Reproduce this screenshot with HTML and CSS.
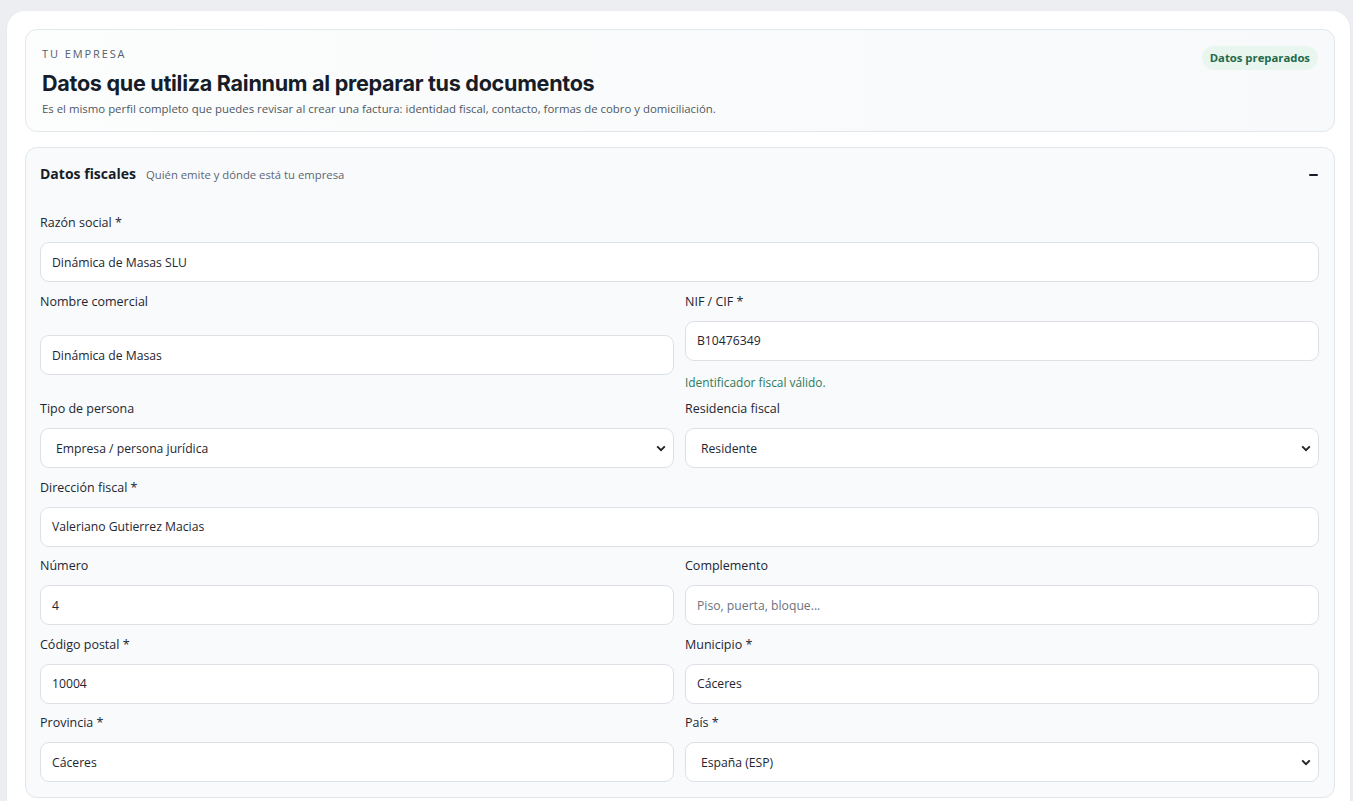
FILE: index.html
```html
<!DOCTYPE html>
<html lang="es">
  <head>
    <meta charset="UTF-8" />
    <title>Tu empresa</title>
    <link rel="stylesheet" href="styles.css">
  </head>
  <body>
    <main class="panel">
      <header class="intro">
        <div class="intro-text">
          <p class="eyebrow">TU EMPRESA</p>
          <h1>Datos que utiliza Rainnum al preparar tus documentos</h1>
          <p class="intro-sub">
            Es el mismo perfil completo que puedes revisar al crear una factura: identidad fiscal, contacto, formas de cobro y domiciliación.
          </p>
        </div>
        <span class="badge">Datos preparados</span>
      </header>

      <section class="section">
        <div class="section-head">
          <h2>Datos fiscales</h2>
          <span class="section-sub">Quién emite y dónde está tu empresa</span>
          <button type="button" class="toggle" aria-label="Contraer"></button>
        </div>

        <div class="grid">
          <div class="field full">
            <label for="razonSocial">Razón social *</label>
            <input type="text" id="razonSocial" value="Dinámica de Masas SLU" />
          </div>

          <div class="field centered">
            <label for="nombreComercial">Nombre comercial</label>
            <input type="text" id="nombreComercial" value="Dinámica de Masas" />
          </div>

          <div class="field">
            <label for="nif">NIF / CIF *</label>
            <input type="text" id="nif" value="B10476349" />
            <span class="hint">Identificador fiscal válido.</span>
          </div>

          <div class="field">
            <label for="tipoPersona">Tipo de persona</label>
            <select id="tipoPersona">
              <option>Empresa / persona jurídica</option>
              <option>Persona física</option>
            </select>
          </div>

          <div class="field">
            <label for="residencia">Residencia fiscal</label>
            <select id="residencia">
              <option>Residente</option>
              <option>No residente</option>
            </select>
          </div>

          <div class="field full">
            <label for="direccion">Dirección fiscal *</label>
            <input type="text" id="direccion" value="Valeriano Gutierrez Macias" />
          </div>

          <div class="field">
            <label for="numero">Número</label>
            <input type="text" id="numero" value="4" />
          </div>

          <div class="field">
            <label for="complemento">Complemento</label>
            <input type="text" id="complemento" placeholder="Piso, puerta, bloque..." />
          </div>

          <div class="field">
            <label for="cp">Código postal *</label>
            <input type="text" id="cp" value="10004" />
          </div>

          <div class="field">
            <label for="municipio">Municipio *</label>
            <input type="text" id="municipio" value="Cáceres" />
          </div>

          <div class="field">
            <label for="provincia">Provincia *</label>
            <input type="text" id="provincia" value="Cáceres" />
          </div>

          <div class="field">
            <label for="pais">País *</label>
            <select id="pais">
              <option>España (ESP)</option>
              <option>Portugal (PRT)</option>
            </select>
          </div>
        </div>
      </section>
    </main>
  </body>
</html>
```

FILE: styles.css
```css
* {
  margin: 0;
  padding: 0;
  box-sizing: border-box;
}

body {
  font-family: 'Open Sans', 'Noto Sans', sans-serif;
  background: #eceef1;
  color: #1e2631;
  padding: 11px 3px 0 7px;
  height: 801px;
  overflow: hidden;
}

.panel {
  background: #ffffff;
  border-radius: 18px 18px 0 0;
  padding: 18px 15px 0 18px;
  min-height: 800px;
  box-shadow: 0 1px 3px rgba(20, 30, 45, 0.05);
}

.intro {
  display: flex;
  justify-content: space-between;
  align-items: flex-start;
  padding: 16px 16px 14px 16px;
  border: 1px solid #e3e6ea;
  border-radius: 12px;
  background: linear-gradient(90deg, #fcfdfd 0%, #f7f9fa 100%);
  margin-bottom: 15px;
}

.eyebrow {
  font-size: 11px;
  letter-spacing: 1.9px;
  color: #56606c;
  line-height: 15px;
  font-weight: 500;
}

h1 {
  font-family: Inter, 'Noto Sans', sans-serif;
  font-size: 21.6px;
  font-weight: 700;
  letter-spacing: -0.3px;
  color: #161d29;
  line-height: 28px;
  margin-top: 8px;
}

.intro-sub {
  font-size: 11.4px;
  color: #4f5863;
  line-height: 16px;
  margin-top: 4px;
}

.badge {
  margin-top: 0;
  padding: 5px 8px;
  border-radius: 12px;
  background: #e9f5ef;
  color: #1f6a4b;
  font-size: 11.3px;
  font-weight: 700;
  line-height: 14px;
  white-space: nowrap;
}

.section {
  border: 1px solid #e2e6ea;
  border-radius: 12px;
  background: #f8fafc;
  padding: 16px 15px 15px 14px;
}

.section-head {
  display: flex;
  align-items: baseline;
  gap: 10px;
  height: 22px;
  margin-bottom: 27px;
}

h2 {
  font-size: 14px;
  font-weight: 700;
  color: #161d29;
}

.section-sub {
  font-size: 11.3px;
  color: #5d6672;
}

.toggle {
  margin-left: auto;
  align-self: center;
  width: 9px;
  height: 2px;
  margin-right: 1px;
  border: none;
  background: #161d29;
  border-radius: 1px;
}

.grid {
  display: grid;
  grid-template-columns: 1fr 1fr;
  column-gap: 11px;
  row-gap: 9.5px;
}

.full {
  grid-column: 1 / -1;
}

.field {
  display: flex;
  flex-direction: column;
}

.field label {
  font-size: 12.5px;
  font-weight: 500;
  color: #1e2631;
  line-height: 20px;
  margin-bottom: 9px;
}

.centered input {
  margin: auto 0;
}

.field input,
.field select {
  height: 40px;
  width: 100%;
  border: 1px solid #dde1e6;
  border-radius: 9px;
  background: #ffffff;
  font-family: 'Open Sans', 'Noto Sans', sans-serif;
  font-size: 12.2px;
  color: #1e2631;
  padding: 0 11px;
  outline: none;
}

.field input::placeholder {
  color: #6b737d;
}

.field select {
  appearance: none;
  padding-left: 15px;
  background-image: url("data:image/svg+xml;utf8,<svg xmlns='http://www.w3.org/2000/svg' width='10' height='7' viewBox='0 0 10 7'><path d='M1.2 1.4 L5 5.2 L8.8 1.4' fill='none' stroke='%23222' stroke-width='1.9'/></svg>");
  background-repeat: no-repeat;
  background-position: right 7px center;
  background-size: 10px 7px;
}

.hint {
  font-size: 11.9px;
  color: #2e7a5b;
  line-height: 16px;
  margin-top: 13px;
}
```
